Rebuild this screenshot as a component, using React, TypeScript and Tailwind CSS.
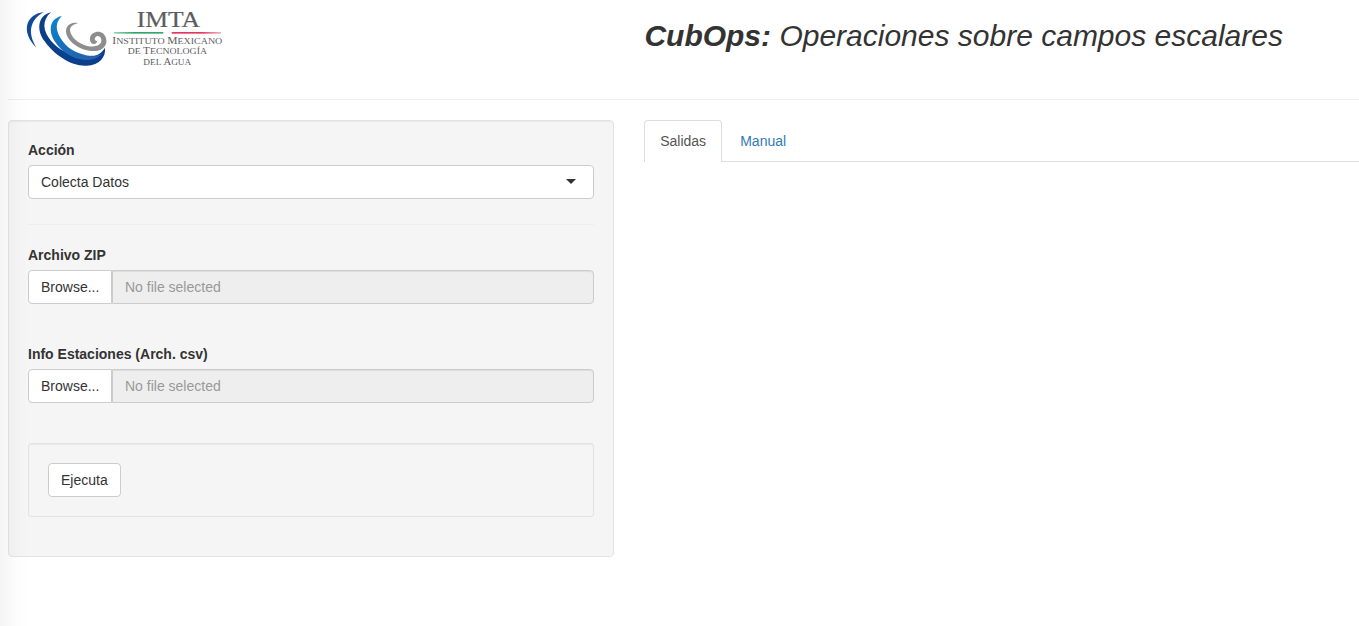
function Logo() {
  return (
    <svg className="block h-[66px] w-[210px]" viewBox="0 0 630 198" role="img" aria-label="IMTA">
      <defs>
        <linearGradient id="wave" x1="0" x2="1" y1="0" y2="1">
          <stop offset="0" stopColor="#0b84d0" />
          <stop offset="0.4" stopColor="#1470bd" />
          <stop offset="1" stopColor="#2b5ea8" />
        </linearGradient>
        <linearGradient id="green" x1="0" x2="1">
          <stop offset="0" stopColor="#35a56b" stopOpacity="0.5" />
          <stop offset="0.4" stopColor="#35a56b" />
          <stop offset="1" stopColor="#35a56b" />
        </linearGradient>
        <linearGradient id="red" x1="0" x2="1">
          <stop offset="0" stopColor="#e0395f" />
          <stop offset="0.6" stopColor="#e0395f" />
          <stop offset="1" stopColor="#e0395f" stopOpacity="0.4" />
        </linearGradient>
      </defs>
      <path fill="#10489a" d="M72 21C14 28 3 85 50 128C23 88 27 44 72 21Z" />
      <path fill="#0b3f8c" d="M93 22C53 31 48 76 74 109C102 150 155 185 200 182C239 180 258 156 255 128C242 151 216 159 184 156C146 151 114 132 94 109C68 78 65 46 93 22Z" />
      <path fill="url(#wave)" d="M125 33C89 41 84 76 104 109C126 142 157 162 196 165C219 166 237 157 246 147C229 153 208 155 188 148C160 140 140 126 128 109C107 80 103 56 125 33Z" />
      <path fill="#8e8e90" d="M175 54C148 49 134 66 139 86C146 114 185 139 225 138C248 137 262 120 259 104C256 84 240 78 228 81C210 85 205 103 214 114C220 120 232 116 231 108C222 108 222 96 232 93C243 92 247 106 242 114C235 124 220 126 205 124C175 118 152 96 150 76C150 64 160 58 175 54Z" />
      <g fill="#5c5d60" stroke="#5c5d60" strokeWidth="0.7" fontFamily="'Liberation Serif', serif">
        <text x="350" y="67" fontSize="70" textLength="190" lengthAdjust="spacingAndGlyphs">IMTA</text>
        <text x="277" y="116" fontSize="30" textLength="330" lengthAdjust="spacingAndGlyphs" strokeWidth="0">
          I<tspan fontSize="26">NSTITUTO </tspan>M<tspan fontSize="26">EXICANO</tspan>
        </text>
        <text x="323" y="148" fontSize="30" textLength="238" lengthAdjust="spacingAndGlyphs" strokeWidth="0">
          <tspan fontSize="26">DE </tspan>T<tspan fontSize="26">ECNOLOGÍA</tspan>
        </text>
        <text x="370" y="181" fontSize="30" textLength="144" lengthAdjust="spacingAndGlyphs" strokeWidth="0">
          <tspan fontSize="26">DEL </tspan>A<tspan fontSize="26">GUA</tspan>
        </text>
      </g>
      <rect x="282" y="81" width="148" height="5" fill="url(#green)" />
      <rect x="455" y="81" width="148" height="5" fill="url(#red)" />
    </svg>
  );
}

function FileField({ label }: { label: string }) {
  return (
    <div>
      <div className="mb-[5px] font-bold">{label}</div>
      <div className="flex h-[34px]">
        <button className="w-[84px] rounded-l border border-[#ccc] bg-white pl-3 text-left">Browse...</button>
        <div className="flex flex-1 items-center rounded-r border border-[#ccc] bg-[#eee] px-3 text-[#999] shadow-[inset_0_1px_1px_rgba(0,0,0,0.075)]">
          No file selected
        </div>
      </div>
    </div>
  );
}

export default function App() {
  return (
    <div className="relative h-[626px] overflow-hidden bg-white pl-2 font-['Liberation_Sans',Arial,sans-serif] text-[14px] leading-5 text-[#333]">
      <header className="flex h-[99px]">
        <div className="w-[636.4px] shrink-0 pl-3 pt-[5px]">
          <Logo />
        </div>
        <h1 className="whitespace-nowrap pt-[19px] text-[30px] leading-[33px] italic">
          <b>CubOps:</b> Operaciones sobre campos escalares
        </h1>
      </header>
      <hr className="border-[#eee]" />
      <main className="flex items-start pt-5">
        <section className="mr-[30.2px] h-[437px] w-[606px] shrink-0 rounded border border-[#e3e3e3] bg-[#f5f5f5] p-[19px] shadow-[inset_0_1px_1px_rgba(0,0,0,0.05)]">
          <div className="mb-[5px] font-bold">Acción</div>
          <button className="flex h-[34px] w-full items-center justify-between rounded border border-[#ccc] bg-white pl-3 pr-[17px]">
            <span>Colecta Datos</span>
            <span className="mb-px border-x-[5px] border-t-[5px] border-x-transparent border-t-[#333]" />
          </button>
          <hr className="mb-5 mt-[25px] border-[#eee]" />
          <div className="flex flex-col gap-10">
            <FileField label="Archivo ZIP" />
            <FileField label="Info Estaciones (Arch. csv)" />
            <div className="h-[74px] rounded-[3px] border border-[#e3e3e3] bg-[#f5f5f5] p-[19px] shadow-[inset_0_1px_1px_rgba(0,0,0,0.05)]">
              <button className="h-[34px] rounded border border-[#ccc] bg-white px-3">Ejecuta</button>
            </div>
          </div>
        </section>
        <nav className="flex h-[42px] flex-1 items-end">
          <a className="h-[42px] w-[78px] rounded-t border border-b-0 border-[#ddd] bg-white pl-[15px] pt-[10px] text-[#555]">Salidas</a>
          <a className="h-[42px] flex-1 border-b border-[#ddd] pl-[18px] pt-[11px] text-[#337ab7]">Manual</a>
        </nav>
      </main>
      <div className="pointer-events-none absolute inset-y-0 left-0 w-7 bg-linear-to-r from-black/[0.04] via-black/[0.015] to-transparent" />
    </div>
  );
}
